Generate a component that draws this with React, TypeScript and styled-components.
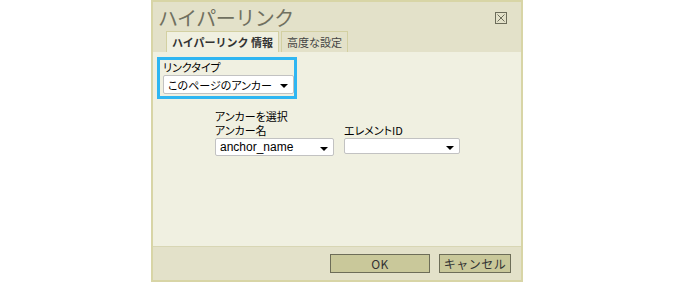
import React from 'react';
import styled, { createGlobalStyle } from 'styled-components';

const GlobalStyle = createGlobalStyle`
  html, body {
    margin: 0;
    padding: 0;
    background: #ffffff;
  }
  body {
    font-family: "Noto Sans CJK JP", "DejaVu Sans", sans-serif;
  }
`;

const Page = styled.div`
  width: 675px;
  height: 282px;
  overflow: hidden;
  display: flex;
  padding-left: 151px;
  box-sizing: border-box;
`;

const Dialog = styled.div`
  width: 372px;
  height: 282px;
  box-sizing: border-box;
  border: 2px solid #d8d5a6;
  background: #e3e1c9;
  display: flex;
  flex-direction: column;
`;

const Header = styled.div`
  height: 50px;
  display: flex;
  flex-direction: column;
  justify-content: space-between;
`;

const TitleRow = styled.div`
  display: flex;
  justify-content: space-between;
  align-items: flex-start;
  padding: 3px 14px 0 5px;
`;

const Title = styled.div`
  font-size: 20px;
  line-height: 26px;
  color: #707060;
  letter-spacing: -0.5px;
`;

const CloseButton = styled.div`
  margin-top: 7px;
  width: 12px;
  height: 12px;
  display: flex;
`;

const Tabs = styled.div`
  display: flex;
  gap: 2px;
  padding-left: 13px;
`;

const Tab = styled.div<{ active?: boolean }>`
  height: 21px;
  box-sizing: border-box;
  padding: 0 5px;
  display: flex;
  align-items: center;
  font-size: 11px;
  font-weight: ${({ active }) => (active ? 'bold' : 'normal')};
  color: ${({ active }) => (active ? '#333' : '#444')};
  background: ${({ active }) => (active ? '#f0f0e1' : '#e3e1c9')};
  border: 1px solid #d3d0a2;
  border-bottom: none;
  white-space: nowrap;
`;

const Body = styled.div`
  flex: 1;
  background: #f0f0e1;
  padding: 5px 0 0 4px;
`;

const FocusBox = styled.div`
  width: 140px;
  height: 42px;
  box-sizing: border-box;
  border: 3px solid #2fb6f2;
  padding: 0 0 0 3px;
`;

const Label = styled.div`
  font-size: 11px;
  line-height: 14px;
  height: 14px;
  color: #000;
  font-feature-settings: "palt";
  white-space: nowrap;
`;

const Select = styled.div<{ w: number; h: number }>`
  width: ${({ w }) => w}px;
  height: ${({ h }) => h}px;
  box-sizing: border-box;
  margin-top: 1px;
  background: #ffffff;
  border: 1px solid #c2c2c2;
  border-radius: 2px;
  display: flex;
  align-items: center;
  justify-content: space-between;
  padding: 0 5px 0 4px;
  overflow: hidden;
`;

const SelectText = styled.span<{ latin?: boolean }>`
  font-family: ${({ latin }) =>
    latin ? '"Liberation Sans", sans-serif' : '"Noto Sans CJK JP", sans-serif'};
  font-size: ${({ latin }) => (latin ? '12px' : '11px')};
  font-feature-settings: "palt";
  line-height: 14px;
  color: #000;
  white-space: nowrap;
`;

const Arrow = styled.span`
  flex: none;
  width: 0;
  height: 0;
  margin-top: 3px;
  border-left: 4px solid transparent;
  border-right: 4px solid transparent;
  border-top: 4px solid #000;
`;

const AnchorSection = styled.div`
  margin: 10px 0 0 58px;
`;

const FieldRow = styled.div`
  display: flex;
  gap: 10px;
`;

const Field = styled.div``;

const Footer = styled.div`
  height: 33px;
  border-top: 1px solid #d8d6b4;
  display: flex;
  justify-content: flex-end;
  align-items: center;
  gap: 9px;
  padding-right: 10px;
`;

const Button = styled.div<{ w: number }>`
  width: ${({ w }) => w}px;
  height: 19px;
  box-sizing: border-box;
  background: #c9c89a;
  border: 1px solid #6d6d58;
  display: flex;
  align-items: center;
  justify-content: center;
  font-size: 12px;
  color: #333;
  letter-spacing: 0.5px;
`;

function SelectBox({ w, h, value, latin }: { w: number; h: number; value?: string; latin?: boolean }) {
  return (
    <Select w={w} h={h}>
      <SelectText latin={latin}>{value}</SelectText>
      <Arrow />
    </Select>
  );
}

export default function App() {
  return (
    <>
      <GlobalStyle />
      <Page>
        <Dialog>
          <Header>
            <TitleRow>
              <Title>ハイパーリンク</Title>
              <CloseButton>
                <svg width="12" height="12" viewBox="0 0 12 12">
                  <rect x="0.5" y="0.5" width="11" height="11" fill="none" stroke="#6c6c5a" />
                  <path d="M2.5 2.5 L9.5 9.5 M9.5 2.5 L2.5 9.5" stroke="#6c6c5a" strokeWidth="1" />
                </svg>
              </CloseButton>
            </TitleRow>
            <Tabs>
              <Tab active>ハイパーリンク 情報</Tab>
              <Tab>高度な設定</Tab>
            </Tabs>
          </Header>
          <Body>
            <FocusBox>
              <Label>リンクタイプ</Label>
              <SelectBox w={131} h={19} value="このページのアンカー" />
            </FocusBox>
            <AnchorSection>
              <Label>アンカーを選択</Label>
              <FieldRow>
                <Field>
                  <Label>アンカー名</Label>
                  <SelectBox w={119} h={18} value="anchor_name" latin />
                </Field>
                <Field>
                  <Label>エレメントID</Label>
                  <SelectBox w={116} h={16} />
                </Field>
              </FieldRow>
            </AnchorSection>
          </Body>
          <Footer>
            <Button w={100}>OK</Button>
            <Button w={72}>キャンセル</Button>
          </Footer>
        </Dialog>
      </Page>
    </>
  );
}
